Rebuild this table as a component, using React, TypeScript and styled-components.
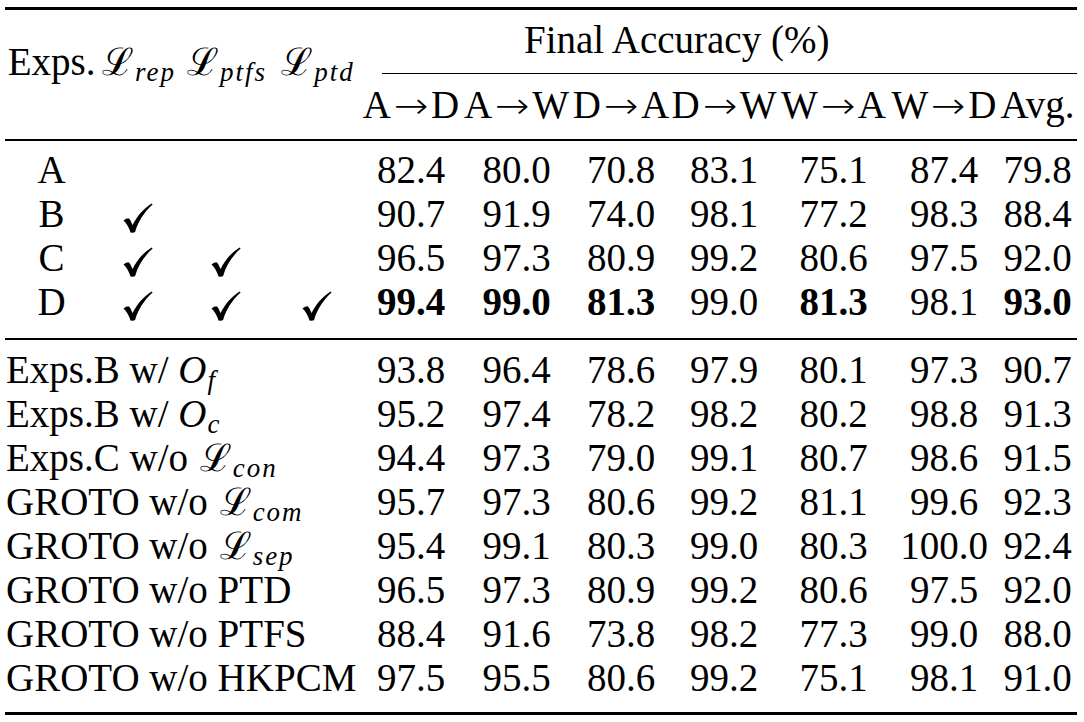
import React from "react";
import styled, { createGlobalStyle } from "styled-components";

const GlobalStyle = createGlobalStyle`
  html, body {
    margin: 0;
    padding: 0;
    background: #ffffff;
  }
  body {
    font-family: "Liberation Serif", "Times New Roman", serif;
    color: #000000;
  }
`;

const COLS = "93px 80px 96px 86px 102px 109px 100px 106px 113px 108px 79px";

const TableWrap = styled.div`
  width: 1072px;
  padding: 7px 0 0 5px;
  font-size: 39px;
`;

const Rule = styled.div<{ $h: number; $mt?: number; $mb?: number }>`
  height: ${(p) => p.$h}px;
  margin-top: ${(p) => p.$mt ?? 0}px;
  margin-bottom: ${(p) => p.$mb ?? 0}px;
  background: #000000;
`;

const HeadGrid = styled.div`
  display: grid;
  grid-template-columns: ${COLS};
  grid-template-rows: 44px auto 44px;
`;

const StubHead = styled.div`
  grid-row: 1 / span 3;
  align-self: start;
  margin-top: 22px;
  line-height: 44px;
  height: 44px;
  text-align: center;
  white-space: nowrap;
`;

const GroupHead = styled.div`
  grid-column: 5 / -1;
  grid-row: 1;
  line-height: 44px;
  padding-left: 164px;
  white-space: nowrap;
`;

const CMidRule = styled.div`
  grid-column: 5 / -1;
  grid-row: 2;
  height: 1px;
  margin: 11px 0 9px 22px;
  background: #000000;
`;

const ColHead = styled.div`
  grid-row: 3;
  line-height: 44px;
  text-align: center;
  white-space: nowrap;
`;

const Arrow = styled.span`
  display: inline-block;
  width: 40px;
  text-align: center;
  font-family: "DejaVu Sans ExtraLight", "DejaVu Sans", sans-serif;
  font-weight: 200;
  font-size: 36px;
  transform: scaleX(1.15);
`;

const BodyGrid = styled.div`
  display: grid;
  grid-template-columns: ${COLS};
  grid-auto-rows: 44px;
  line-height: 44px;
`;

const Cell = styled.div<{ $bold?: boolean }>`
  text-align: center;
  white-space: nowrap;
  font-weight: ${(p) => (p.$bold ? 700 : 400)};
`;

const LabelCell = styled.div`
  grid-column: span 4;
  text-align: left;
  white-space: nowrap;
  padding-left: 1px;
`;

const Cal = styled.span`
  font-family: "DejaVu Serif", serif;
  font-style: normal;
  font-size: 38px;
  margin-left: 2px;
`;

const MathIt = styled.span`
  font-style: italic;
`;

const Sub = styled.span`
  font-style: italic;
  font-size: 27px;
  letter-spacing: 2px;
  position: relative;
  top: 6px;
  margin-left: 1px;
`;

const CheckSvg = styled.svg`
  width: 30px;
  height: 30px;
  vertical-align: -6px;
`;

const Check = () => (
  <CheckSvg viewBox="0 0 30 30" aria-label="✓">
    <path
      d="M0.5 17.5 C2.5 16 4 15.3 5.2 15.3 C6.6 15.3 8 18.5 9.6 22 C14 13 20 6 28.6 0.4 L29.6 1.6 C21.5 9 15.5 17.5 12 29.2 C10.8 29.7 8.8 29.9 7.6 29.5 C5.6 24 3.2 19.6 0.5 17.5 Z"
      fill="#000"
    />
  </CheckSvg>
);

type Val = { v: string; b?: boolean };

const mk = (s: string, bold: number[] = []): Val[] =>
  s.split(" ").map((v, i) => ({ v, b: bold.includes(i) }));

const topRows: { name: string; checks: boolean[]; vals: Val[] }[] = [
  { name: "A", checks: [false, false, false], vals: mk("82.4 80.0 70.8 83.1 75.1 87.4 79.8") },
  { name: "B", checks: [true, false, false], vals: mk("90.7 91.9 74.0 98.1 77.2 98.3 88.4") },
  { name: "C", checks: [true, true, false], vals: mk("96.5 97.3 80.9 99.2 80.6 97.5 92.0") },
  {
    name: "D",
    checks: [true, true, true],
    vals: mk("99.4 99.0 81.3 99.0 81.3 98.1 93.0", [0, 1, 2, 4, 6]),
  },
];

const L = ({ sub }: { sub: string }) => (
  <>
    <Cal>ℒ</Cal>
    <Sub>{sub}</Sub>
  </>
);

const O = ({ sub }: { sub: string }) => (
  <>
    <MathIt>O</MathIt>
    <Sub>{sub}</Sub>
  </>
);

const bottomRows: { label: React.ReactNode; vals: Val[] }[] = [
  { label: <>Exps.B w/ <O sub="f" /></>, vals: mk("93.8 96.4 78.6 97.9 80.1 97.3 90.7") },
  { label: <>Exps.B w/ <O sub="c" /></>, vals: mk("95.2 97.4 78.2 98.2 80.2 98.8 91.3") },
  { label: <>Exps.C w/o <L sub="con" /></>, vals: mk("94.4 97.3 79.0 99.1 80.7 98.6 91.5") },
  { label: <>GROTO w/o <L sub="com" /></>, vals: mk("95.7 97.3 80.6 99.2 81.1 99.6 92.3") },
  { label: <>GROTO w/o <L sub="sep" /></>, vals: mk("95.4 99.1 80.3 99.0 80.3 100.0 92.4") },
  { label: <>GROTO w/o PTD</>, vals: mk("96.5 97.3 80.9 99.2 80.6 97.5 92.0") },
  { label: <>GROTO w/o PTFS</>, vals: mk("88.4 91.6 73.8 98.2 77.3 99.0 88.0") },
  { label: <>GROTO w/o HKPCM</>, vals: mk("97.5 95.5 80.6 99.2 75.1 98.1 91.0") },
];

const tasks: [string, string][] = [
  ["A", "D"],
  ["A", "W"],
  ["D", "A"],
  ["D", "W"],
  ["W", "A"],
  ["W", "D"],
];

export default function App() {
  return (
    <>
      <GlobalStyle />
      <TableWrap>
        <Rule $h={3} $mb={8} />
        <HeadGrid>
          <StubHead>Exps.</StubHead>
          <StubHead>
            <L sub="rep" />
          </StubHead>
          <StubHead>
            <L sub="ptfs" />
          </StubHead>
          <StubHead>
            <L sub="ptd" />
          </StubHead>
          <GroupHead>Final Accuracy (%)</GroupHead>
          <CMidRule />
          {tasks.map(([s, t]) => (
            <ColHead key={s + t}>
              {s}
              <Arrow>→</Arrow>
              {t}
            </ColHead>
          ))}
          <ColHead>Avg.</ColHead>
        </HeadGrid>
        <Rule $h={2} $mt={12} $mb={7} />
        <BodyGrid>
          {topRows.map((r) => (
            <React.Fragment key={r.name}>
              <Cell>{r.name}</Cell>
              {r.checks.map((c, i) => (
                <Cell key={i}>{c ? <Check /> : null}</Cell>
              ))}
              {r.vals.map((v, i) => (
                <Cell key={i} $bold={v.b}>
                  {v.v}
                </Cell>
              ))}
            </React.Fragment>
          ))}
        </BodyGrid>
        <Rule $h={2} $mt={14} $mb={8} />
        <BodyGrid>
          {bottomRows.map((r, ri) => (
            <React.Fragment key={ri}>
              <LabelCell>{r.label}</LabelCell>
              {r.vals.map((v, i) => (
                <Cell key={i} $bold={v.b}>
                  {v.v}
                </Cell>
              ))}
            </React.Fragment>
          ))}
        </BodyGrid>
        <Rule $h={3} $mt={12} />
      </TableWrap>
    </>
  );
}
